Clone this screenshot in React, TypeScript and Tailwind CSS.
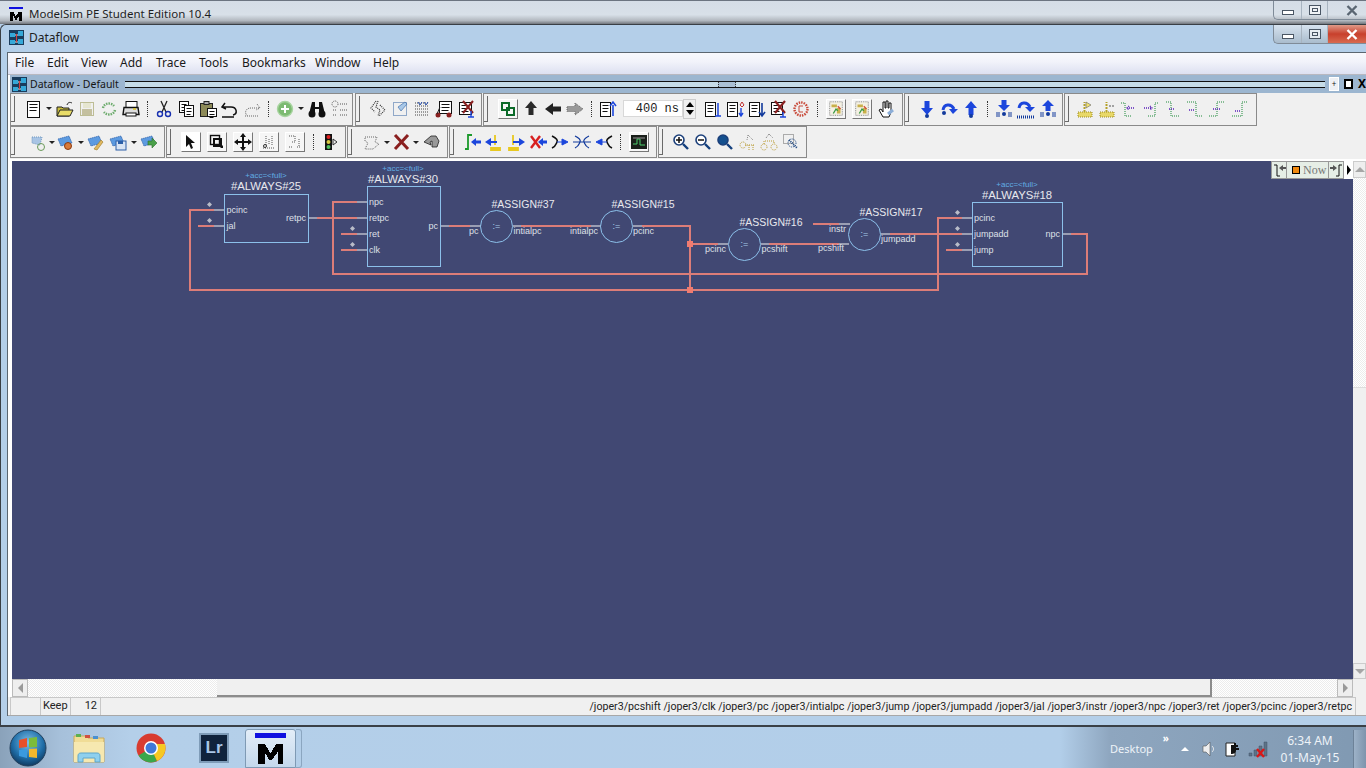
import type { ReactNode } from 'react';

// shared icon frame, 20x20 like the old MFC toolbar bitmaps
function S({ children }: { children: ReactNode }) {
  return (
    <svg width="20" height="20" viewBox="0 0 20 20" fill="none">
      {children}
    </svg>
  );
}

const Blue = '#1c46dc';

function Arrow({ d, c = Blue }: { d: 'u' | 'd' | 'l' | 'r'; c?: string }) {
  const p = {
    u: 'M10 2l6 7h-3.5v7h-5V9H4z',
    d: 'M7.5 2h5v7H16l-6 7-6-7h3.5z',
    l: 'M2 10l8-6v3.5h8v5h-8V16z',
    r: 'M18 10l-8-6v3.5H2v5h8V16z',
  }[d];
  return <path d={p} fill={c} />;
}

function Doc({ x = 2, y = 3, w = 11, h = 14 }: { x?: number; y?: number; w?: number; h?: number }) {
  return (
    <g>
      <rect x={x + 0.5} y={y + 0.5} width={w} height={h} fill="#fff" stroke="#111" />
      <path d={`M${x + 2.5} ${y + 3.5}h${w - 4}M${x + 2.5} ${y + 6.5}h${w - 4}M${x + 2.5} ${y + 9.5}h${w - 5}`} stroke="#111" />
    </g>
  );
}

function DotBox({ c = '#777' }: { c?: string }) {
  return <rect x="3.5" y="3.5" width="13" height="13" stroke={c} strokeDasharray="1 1" />;
}

function Flag({ flip = false }: { flip?: boolean }) {
  return (
    <S>
      <rect x="3" y="13" width="14" height="5" fill="#e8d868" stroke="#9b8a20" strokeDasharray="1 1" />
      <path d="M9.5 13V3" stroke="#b5a22a" strokeWidth="2" strokeDasharray="2 1" />
      {flip ? <path d="M12 7h5" stroke="#555" strokeDasharray="2 1" /> : <path d="M11 3l5 3-5 3z" fill="#f0e070" stroke="#666" strokeWidth=".6" />}
    </S>
  );
}

function Trace({ d, a }: { d: string; a: string }) {
  return (
    <S>
      <path d={d} stroke="#1e8a3a" strokeDasharray="1 1" />
      <path d={a} stroke="#5a22b8" strokeDasharray="1 1" strokeWidth="1.4" />
    </S>
  );
}

function Wave({ y = 0 }: { y?: number }) {
  return (
    <S>
      <rect x="3" y={2 + y} width="14" height="15" fill="#f4f1e4" stroke="#777" strokeDasharray="1 1" />
      <path d="M5 5h6v3H5zM11 9h4v6h-4z" fill="#c9b04a" />
      <path d="M7 15l3-5 2 2" stroke="#3a9a44" strokeWidth="1.5" />
      <path d="M12 7l3 3" stroke="#d04a3a" strokeWidth="1.5" />
    </S>
  );
}

function Cloud({ c = '#5c9ae0' }: { c?: string }) {
  return <path d="M2 7l11-3 3 7-11 3z" fill={c} stroke="#2c5fa8" strokeWidth=".7" strokeDasharray="1.5 .5" />;
}

function Magnify({ fill = '#fff', mark }: { fill?: string; mark?: string }) {
  return (
    <S>
      <circle cx="8" cy="8" r="5" fill={fill} stroke="#1b3f7a" strokeWidth="1.6" />
      <path d="M12 12l5 5" stroke="#14407e" strokeWidth="2.4" />
      {mark ? <path d={mark} stroke="#111" strokeWidth="1.5" /> : null}
    </S>
  );
}

const Wires: string[] = [
  'M214 210H190V290H938V218H962',
  'M198 226H214',
  'M357 202H333V274H1087V234H1071',
  'M317 218H357',
  'M341 234H357',
  'M341 250H357',
  'M449 226H470',
  'M521 226H591',
  'M642 226H690V290',
  'M690 244H718',
  'M769 244H839',
  'M813 224H839',
  'M890 234H962',
  'M946 250H962',
];

const Stubs: string[] = [
  'M214 210H224M214 226H224M309 218H317M357 202H367M357 218H367M357 234H367M357 250H367',
  'M441 226H449M470 226H481M513 226H521M591 226H601M633 226H642M718 244H728M761 244H769',
  'M839 244H849M839 224H850M881 234H890M962 218H972M962 234H972M962 250H972M1063 234H1071',
];

const Labels: [string, number, number][] = [
  ['pcinc', 226.5, 213], ['jal', 226.5, 229], ['npc', 369, 205], ['retpc', 369, 221], ['ret', 369, 237], ['clk', 369, 253],
  ['pc', 469, 234], ['intialpc', 513.5, 234], ['intialpc', 570, 234], ['pcinc', 633, 234], ['pcinc', 705, 252],
  ['pcshift', 761.5, 252], ['pcshift', 818, 251], ['instr', 829, 232], ['jumpadd', 881, 242],
  ['pcinc', 974, 221], ['jumpadd', 974, 237], ['jump', 974, 253],
];

const Dots: [number, number][] = [
  [209.5, 204.5], [209.5, 220.5], [352.5, 228.5], [352.5, 244.5], [957.5, 212.5], [957.5, 228.5], [957.5, 244.5],
];

const Boxes: [string, number, number, number, number, number, number][] = [
  ['#ALWAYS#25', 224.5, 194.5, 84, 48, 266, 190],
  ['#ALWAYS#30', 367.5, 186.5, 73, 80, 403, 183],
  ['#ALWAYS#18', 972.5, 202.5, 90, 64, 1017, 199],
];

const Assigns: [string, number, number, number, number][] = [
  ['#ASSIGN#37', 496.5, 226.5, 523, 208],
  ['#ASSIGN#15', 616.5, 226.5, 643, 208],
  ['#ASSIGN#16', 744.5, 244.5, 771, 226],
  ['#ASSIGN#17', 864.5, 234.5, 891, 216],
];

function Schematic() {
  return (
    <svg width="1341" height="518" viewBox="12 161 1341 518" fill="none" className="block font-['Liberation_Sans',sans-serif]">
      {Wires.map((d) => (
        <path key={d} d={d} stroke="#dc7d78" strokeWidth="2" />
      ))}
      {Stubs.map((d) => (
        <path key={d} d={d} stroke="#f4f4f4" />
      ))}
      <rect x="687" y="241" width="6" height="6" fill="#f07b70" />
      <rect x="687" y="287" width="6" height="6" fill="#f07b70" />
      {Dots.map(([x, y]) => (
        <path key={`${x}-${y}`} d={`M${x} ${y - 2.5}l2.5 2.5-2.5 2.5-2.5-2.5z`} fill="#b9bcc8" />
      ))}
      {Boxes.map(([t, x, y, w, h, cx, by]) => (
        <g key={t}>
          <rect x={x} y={y} width={w} height={h} stroke="#8cc0ea" />
          <text x={cx} y={by} textAnchor="middle" className="fill-[#e8e8ee] text-[11.3px]">{t}</text>
          <text x={cx} y={by - 12} textAnchor="middle" className="fill-[#62aee4] text-[8px]">{'+acc=<full>'}</text>
        </g>
      ))}
      {Assigns.map(([t, x, y, tx, by]) => (
        <g key={t}>
          <circle cx={x} cy={y} r="16" stroke="#8cc0ea" />
          <text x={x} y={y + 2} textAnchor="middle" className="fill-[#a8cdec] text-[9px]">:=</text>
          <text x={tx} y={by} textAnchor="middle" className="fill-[#e8e8ee] text-[10.5px]">{t}</text>
        </g>
      ))}
      {Labels.map(([t, x, y]) => (
        <text key={`${t}-${x}`} x={x} y={y} className="fill-[#dfe0e8] text-[9px]">{t}</text>
      ))}
      <text x="306" y="221" textAnchor="end" className="fill-[#dfe0e8] text-[9px]">retpc</text>
      <text x="438" y="229" textAnchor="end" className="fill-[#dfe0e8] text-[9px]">pc</text>
      <text x="1060" y="237" textAnchor="end" className="fill-[#dfe0e8] text-[9px]">npc</text>
    </svg>
  );
}

function Slot({ className = 'w-[22px]', children }: { className?: string; children: ReactNode }) {
  return <div className={`flex shrink-0 items-center justify-center ${className}`}>{children}</div>;
}

function Drop({ className = 'w-[10px]' }: { className?: string }) {
  return (
    <div className={`flex shrink-0 items-center justify-center ${className}`}>
      <div className="h-0 w-0 border-x-[3px] border-t-[3px] border-x-transparent border-t-[#222]" />
    </div>
  );
}

function Sep() {
  return (
    <div className="flex w-[11px] shrink-0 justify-center">
      <div className="h-[16px] border-l border-dotted border-[#333]" />
    </div>
  );
}

function Raised({ on, children }: { on?: boolean; children: ReactNode }) {
  return (
    <div className={`flex h-[20px] w-[20px] items-center justify-center border border-b-[#777] border-l-white border-r-[#777] border-t-white ${on ? 'bg-white' : 'bg-[#f6f6f6]'}`}>
      {children}
    </div>
  );
}

function Bar({ className, lead, children }: { className: string; lead: string; children: ReactNode }) {
  return (
    <div className={`flex h-full shrink-0 items-center border border-[#8a8a8a] bg-[#f0f0f0] ${className}`}>
      <div className={`h-[26px] w-[4px] shrink-0 border-b border-r border-[#6a6a6a] ${lead}`} />
      {children}
    </div>
  );
}

function RowOne() {
  return (
    <div className="flex h-[33px] shrink-0">
      <Bar className="w-[343px] pb-[2px]" lead="mr-[7px]">
        <Slot><S><Doc x={4} y={2} w={12} h={16} /></S></Slot>
        <Drop />
        <Slot>
          <S>
            <path d="M2 8h5l1 1h6v8H2z" fill="#c9bd3c" stroke="#222" />
            <path d="M2 17l3-6h13l-3 6z" fill="#e8dc68" stroke="#222" />
            <path d="M12 6c1-3 3-3 5-2" stroke="#222" />
          </S>
        </Slot>
        <Slot><S><DotBox c="#8a8a3a" /><rect x="5" y="10" width="10" height="6" fill="#c4c0a0" /><rect x="6" y="4" width="8" height="5" fill="#e6e6d0" /></S></Slot>
        <Slot><S><path d="M4 9c1-5 8-6 11-2M16 11c-1 5-8 6-11 2" stroke="#6cab6c" strokeWidth="2.4" strokeDasharray="1.5 1" /></S></Slot>
        <Slot>
          <S>
            <rect x="5" y="2.5" width="11" height="6" fill="#fff" stroke="#111" />
            <path d="M3 8.5h14l1 7H2z" fill="#ddd" stroke="#111" strokeWidth="1.4" />
            <rect x="5" y="14" width="10" height="3" fill="#fff" stroke="#111" />
            <path d="M12 10h3" stroke="#d8c020" strokeWidth="1.5" />
          </S>
        </Slot>
        <Sep />
        <Slot>
          <S>
            <path d="M7 2l5 11M13 2L8 13" stroke="#222" strokeWidth="1.3" />
            <circle cx="6" cy="15" r="2.5" stroke="#1830b0" strokeWidth="1.4" />
            <circle cx="14" cy="15" r="2.5" stroke="#1830b0" strokeWidth="1.4" />
          </S>
        </Slot>
        <Slot><S><Doc x={3} y={2} w={9} h={11} /><Doc x={8} y={6} w={9} h={11} /></S></Slot>
        <Slot>
          <S>
            <rect x="2.5" y="4.5" width="12" height="13" fill="#8d8a58" stroke="#222" />
            <rect x="6" y="2.5" width="5" height="3" fill="#aaa" stroke="#222" />
            <Doc x={9} y={9} w={9} h={8} />
          </S>
        </Slot>
        <Slot><S><path d="M5 4L2 8l4 2M3 8h8c6 0 7 7 2 8" stroke="#111" strokeWidth="1.5" /><path d="M2 18h12" stroke="#111" strokeWidth="1.5" /></S></Slot>
        <Slot><S><path d="M15 5l3 4-4 2M17 9H9c-6 0-7 6-3 8" stroke="#666" strokeDasharray="1 1" /><path d="M3 17h14" stroke="#666" strokeDasharray="1 1" /></S></Slot>
        <Sep />
        <Slot>
          <S>
            <circle cx="10" cy="10" r="7.5" fill="#7dbb72" stroke="#a8d4a0" strokeWidth="1.4" />
            <path d="M10 6v8M6 10h8" stroke="#fff" strokeWidth="2" />
          </S>
        </Slot>
        <Drop />
        <Slot>
          <S>
            <path d="M5 3h3v5h4V3h3l3 12h-6V10H8v5H2z" fill="#111" />
            <circle cx="5" cy="15" r="3.5" fill="#111" />
            <circle cx="15" cy="15" r="3.5" fill="#111" />
          </S>
        </Slot>
        <Slot>
          <S>
            <circle cx="6" cy="5" r="3" stroke="#555" strokeDasharray="1 1" />
            <path d="M11 5h7M4 11h4M11 11h7M4 16h4M11 16h7" stroke="#555" strokeDasharray="1 1" />
          </S>
        </Slot>
      </Bar>
      <Bar className="ml-[2px] w-[127px] pb-[2px]" lead="mr-[7px]">
        <Slot><S><path d="M8 2L3 9l4 4M12 6l5 5-6 6M10 2l-2 6 4 3-2 6" stroke="#333" strokeDasharray="1 1" strokeWidth="1.2" /></S></Slot>
        <Slot><S><DotBox c="#3060a0" /><path d="M8 8l7-5 2 2-6 7z" fill="#a8c8e8" stroke="#3060a0" strokeWidth=".6" /></S></Slot>
        <Slot><S><path d="M3 4h14M3 7h14M3 10h14M3 13h14M3 16h14" stroke="#444" strokeDasharray="1 1" /><path d="M6 3l2 3 2-3M12 3l2 3 2-3" stroke="#2850b0" /></S></Slot>
        <Slot>
          <S>
            <Doc x={5} y={2} w={12} h={12} />
            <circle cx="4" cy="16" r="2.5" fill="#8a2020" />
            <circle cx="15" cy="16" r="2.5" fill="#8a2020" />
            <path d="M3 15L6 8" stroke="#222" />
          </S>
        </Slot>
        <Slot>
          <S>
            <Doc x={3} y={3} w={12} h={12} />
            <path d="M7 2l10 12M17 2L7 14" stroke="#8a2020" strokeWidth="2" />
            <path d="M15 12v6M12 18h6" stroke={Blue} strokeWidth="1.4" />
          </S>
        </Slot>
      </Bar>
      <Bar className="ml-[1px] w-[420px] pb-[2px]" lead="mr-[9px]">
        <Slot>
          <Raised>
            <svg width="16" height="16" viewBox="0 0 16 16" fill="none">
              <rect x="2" y="2" width="7" height="7" stroke="#0b6a28" strokeWidth="2" />
              <rect x="7" y="7" width="7" height="7" stroke="#0b6a28" strokeWidth="2" />
            </svg>
          </Raised>
        </Slot>
        <Slot className="w-[23px]"><S><Arrow d="u" c="#2a2a2a" /></S></Slot>
        <Slot><S><Arrow d="l" c="#222" /></S></Slot>
        <Slot><S><path d="M18 10l-8-6v3.5H2v5h8V16z" fill="#999" stroke="#666" strokeDasharray="1 1" /></S></Slot>
        <Sep />
        <Slot><S><Doc x={2} y={3} w={10} h={14} /><path d="M15 17V6M12 7l3-4 3 4" stroke={Blue} strokeWidth="1.6" /></S></Slot>
        <div className="ml-[4px] flex h-[17px] w-[60px] shrink-0 items-center justify-end border border-[#d8d8d8] bg-white pr-[3px] font-['Liberation_Mono',monospace] text-[12px] text-[#222]">
          400 ns
        </div>
        <div className="flex h-[20px] w-[13px] shrink-0 flex-col items-center justify-center gap-[3px] border border-[#ccc]">
          <div className="h-0 w-0 border-x-[4px] border-b-[5px] border-x-transparent border-b-black" />
          <div className="h-0 w-0 border-x-[4px] border-t-[5px] border-x-transparent border-t-black" />
        </div>
        <Slot className="ml-[6px] w-[22px]"><S><Doc x={2} y={3} w={10} h={14} /><path d="M15 4v13M12 17h6" stroke={Blue} strokeWidth="1.5" /></S></Slot>
        <Slot><S><Doc x={2} y={3} w={10} h={14} /><path d="M15 6l2-3 2 3-2 2z" stroke="#c03030" /><path d="M16 9v8M14 14l2 3 2-3" stroke={Blue} strokeWidth="1.4" /></S></Slot>
        <Slot><S><Doc x={2} y={3} w={10} h={14} /><path d="M15 4v13M12 13l3 4 3-4" stroke="#123a9c" strokeWidth="1.6" /></S></Slot>
        <Slot><S><Doc x={2} y={3} w={11} h={12} /><path d="M6 2l10 12M16 2L6 14" stroke="#8a2020" strokeWidth="2.2" /><path d="M14 13v5M11 18h6" stroke={Blue} strokeWidth="1.4" /></S></Slot>
        <Slot><S><circle cx="10" cy="10" r="6.5" stroke="#c84a3a" strokeWidth="2.4" strokeDasharray="1.5 1" /><path d="M12 7H8v6h4" stroke="#c84a3a" /></S></Slot>
        <Sep />
        <Slot className="w-[26px]"><Raised><Wave /></Raised></Slot>
        <Slot className="w-[25px]"><Raised><Wave /></Raised></Slot>
        <Slot className="w-[24px]">
          <S>
            <path d="M7 18l-4-7 2-1 2 3V3h2v6h1V2h2v7h1V4h2v9l-2 5z" fill="#fff" stroke="#111" />
            <path d="M12 15l5-4" stroke="#8caed8" strokeWidth="3" />
          </S>
        </Slot>
      </Bar>
      <Bar className="ml-[1px] w-[159px] pb-[2px]" lead="mr-[7px]">
        <Slot><S><Arrow d="d" /><circle cx="10" cy="17" r="2" fill="#123a9c" /></S></Slot>
        <Slot><S><path d="M4 11c1-6 8-7 11-1" stroke={Blue} strokeWidth="3" /><path d="M10 10h9l-5 5z" fill={Blue} /><circle cx="5" cy="14" r="2" fill="#123a9c" /></S></Slot>
        <Slot><S><Arrow d="u" /><circle cx="10" cy="17" r="2" fill="#123a9c" /></S></Slot>
        <Sep />
        <Slot><S><path d="M7.5 1h5v5H16l-6 6-6-6h3.5z" fill={Blue} /><circle cx="10" cy="15" r="2" fill="#123a9c" /><path d="M3 13v5M5 13v5M15 13v5M17 13v5" stroke="#123a9c" /></S></Slot>
        <Slot><S><path d="M3 9c1-6 8-7 11-1" stroke={Blue} strokeWidth="3" /><path d="M9 8h10l-5 5z" fill={Blue} /><path d="M1 18h18" stroke="#123a9c" strokeWidth="3" strokeDasharray="1 1" /></S></Slot>
        <Slot><S><path d="M10 1l6 6h-3.5v5h-5V7H4z" fill={Blue} /><circle cx="10" cy="15" r="2" fill="#123a9c" /><path d="M3 13v5M5 13v5M15 13v5M17 13v5" stroke="#123a9c" /></S></Slot>
      </Bar>
      <Bar className="ml-[1px] w-[193px] pb-[2px]" lead="mr-[5px]">
        <Slot><Flag /></Slot>
        <Slot><Flag flip /></Slot>
        <Slot><Trace d="M2 4h4v13h7" a="M15 9H8M10 7l-2 2 2 2" /></Slot>
        <Slot><Trace d="M17 4h-3v13H7" a="M3 9h8M9 7l2 2-2 2" /></Slot>
        <Slot><Trace d="M3 3h5v14h9" a="M6 10h5" /></Slot>
        <Slot><Trace d="M2 3h9v14h6" a="M4 11h6" /></Slot>
        <Slot><Trace d="M17 3h-7v14H2" a="M6 10h8" /></Slot>
        <Slot><Trace d="M18 3h-5v14H3" a="M6 12h6" /></Slot>
      </Bar>
    </div>
  );
}

function RowTwo() {
  return (
    <div className="flex h-[32px] shrink-0">
      <Bar className="w-[155px]" lead="mr-[12px]">
        <Slot><S><path d="M4 5l10 0-2 8-8-2z" fill="#a8c4e4" stroke="#7098c0" strokeDasharray="1 1" /><circle cx="13" cy="15" r="3.5" stroke="#6a9a5a" /></S></Slot>
        <Drop className="w-[6px]" />
        <Slot><S><Cloud /><circle cx="12" cy="14" r="3.5" fill="#d87a3a" stroke="#8a3a10" /></S></Slot>
        <Drop className="w-[8px]" />
        <Slot><S><Cloud /><path d="M8 17l7-9 2 2-6 8z" fill="#e0b860" stroke="#a07820" strokeWidth=".6" /></S></Slot>
        <Slot><S><Cloud /><rect x="8" y="9" width="10" height="9" fill="#d8e4f4" stroke="#2c5fa8" /><rect x="10" y="9" width="5" height="3" fill="#2c5fa8" /></S></Slot>
        <Drop className="w-[9px]" />
        <Slot><S><Cloud /><path d="M9 9h4V6l5 5-5 5v-3H9z" fill="#4aa04a" stroke="#2a702a" strokeWidth=".6" /></S></Slot>
      </Bar>
      <Bar className="ml-[1px] w-[180px]" lead="mr-[7px]">
        <Slot className="w-[26px]">
          <Raised on>
            <svg width="16" height="16" viewBox="0 0 16 16"><path d="M3 1v12l3-3 2 5 2-1-2-5h4z" fill="#111" /></svg>
          </Raised>
        </Slot>
        <Slot className="w-[26px]">
          <Raised>
            <svg width="16" height="16" viewBox="0 0 16 16" fill="none"><rect x="1.5" y="1.5" width="9" height="9" stroke="#111" strokeWidth="1.4" /><rect x="5" y="5" width="7" height="7" stroke="#111" strokeWidth="2" /><path d="M11 14l3-3v3z" fill="#111" /></svg>
          </Raised>
        </Slot>
        <Slot className="w-[26px]">
          <Raised>
            <svg width="18" height="18" viewBox="0 0 18 18"><path d="M9 0l3 4h-2v4h4V6l4 3-4 3v-2h-4v4h2l-3 4-3-4h2v-4H4v2L0 9l4-3v2h4V4H6z" fill="#111" /></svg>
          </Raised>
        </Slot>
        <Slot className="w-[26px]">
          <Raised>
            <svg width="16" height="16" viewBox="0 0 16 16" fill="none"><path d="M5 2v9M11 2v9M8 5v6M2 14h12" stroke="#555" strokeDasharray="1 1" /><circle cx="4" cy="12" r="1.5" stroke="#333" /></svg>
          </Raised>
        </Slot>
        <Slot className="w-[26px]">
          <Raised>
            <svg width="16" height="16" viewBox="0 0 16 16" fill="none"><path d="M2 2h6v6H4M12 5v7M2 13h4M10 13h4" stroke="#555" strokeDasharray="1 1" /></svg>
          </Raised>
        </Slot>
        <Sep />
        <Slot>
          <S>
            <rect x="5" y="2" width="7" height="16" fill="#111" />
            <circle cx="8.5" cy="5" r="2" fill="#e02020" />
            <circle cx="8.5" cy="10" r="2" fill="#d8c840" />
            <circle cx="8.5" cy="15" r="2" fill="#50c060" />
            <path d="M13 7l4 3-4 3z" stroke="#333" />
          </S>
        </Slot>
      </Bar>
      <Bar className="ml-[1px] w-[101px]" lead="mr-[9px]">
        <Slot><S><path d="M3 5h12l-2 5 4 2-6 5H3l3-6-3-2z" stroke="#666" strokeDasharray="1 1" /></S></Slot>
        <Drop className="w-[7px]" />
        <Slot><S><path d="M4 3l13 14M17 3L4 17" stroke="#8a1f1f" strokeWidth="3" /></S></Slot>
        <Drop className="w-[8px]" />
        <Slot><S><path d="M3 10l7-6h5l3 5-2 6h-5V9l-2 1 1 3z" fill="#999" stroke="#222" strokeWidth=".8" /></S></Slot>
      </Bar>
      <Bar className="ml-[1px] w-[208px]" lead="mr-[7px]">
        <Slot><S><path d="M3 17h3V3h4" stroke="#1c9a2c" strokeWidth="1.8" /><path d="M9 10l5-4v2.500h5v3h-5V14z" fill={Blue} /></S></Slot>
        <Slot><S><path d="M11 3v10M7 16h9v2H7z" stroke="#e8c820" strokeWidth="1.8" /><path d="M1 10l6-4v3h6v2H7v3z" fill={Blue} /></S></Slot>
        <Slot><S><path d="M7 3v10M3 16h9v2H3z" stroke="#e8c820" strokeWidth="1.8" /><path d="M19 10l-6-4v3H7v2h6v3z" fill={Blue} /></S></Slot>
        <Slot><S><path d="M3 4l9 12M12 4L3 16" stroke="#d82020" strokeWidth="2.4" /><path d="M10 10l5-4v2.500h4v3h-4V14z" fill={Blue} /></S></Slot>
        <Slot><S><path d="M2 4c4 2 6 4 5 6s-1 4-5 6" stroke="#111" strokeWidth="1.6" /><path d="M7 10h5V7l6 3-6 3v-3" fill={Blue} stroke={Blue} /></S></Slot>
        <Slot><S><path d="M3 4c4 2 6 4 5 6s-1 4-5 6M17 4c-4 2-6 4-5 6s1 4 5 6M1 10h18" stroke="#123a9c" strokeWidth="1.2" /></S></Slot>
        <Slot><S><path d="M18 4c-4 2-6 4-5 6s1 4 5 6" stroke="#111" strokeWidth="1.6" /><path d="M13 10H8V7l-6 3 6 3v-3" fill={Blue} stroke={Blue} /></S></Slot>
        <Sep />
        <Slot className="w-[26px]">
          <Raised>
            <svg width="16" height="14" viewBox="0 0 16 14"><rect width="16" height="14" fill="#1a1f1a" /><path d="M2 9h4V4h3v6h5" stroke="#4ad06a" fill="none" /><path d="M2 3h12" stroke="#999" /></svg>
          </Raised>
        </Slot>
      </Bar>
      <Bar className="ml-[1px] w-[149px]" lead="mr-[7px]">
        <Slot><Magnify mark="M8 5v6M5 8h6" /></Slot>
        <Slot><Magnify mark="M5 8h6" /></Slot>
        <Slot><Magnify fill="#14508e" /></Slot>
        <Slot><S><circle cx="6" cy="13" r="3" stroke="#b89a30" strokeDasharray="1 1" /><path d="M8 13h9M12 13v5M16 13v5" stroke="#b89a30" strokeDasharray="1 1" /><path d="M11 3l5 5M11 3l-1 5" stroke="#888" strokeDasharray="1 1" /></S></Slot>
        <Slot><S><circle cx="5" cy="15" r="3" stroke="#b89a30" strokeDasharray="1 1" /><circle cx="15" cy="15" r="3" stroke="#b89a30" strokeDasharray="1 1" /><path d="M5 12V9h10v3" stroke="#b89a30" strokeDasharray="1 1" /><path d="M10 2l4 4M10 2L7 6" stroke="#777" strokeDasharray="1 1" /></S></Slot>
        <Slot><S><rect x="2.5" y="2.5" width="10" height="9" stroke="#666" strokeDasharray="1 1" /><path d="M8 8l8 8" stroke="#14407e" strokeWidth="2" strokeDasharray="1 1" /><circle cx="11" cy="11" r="4" stroke="#14407e" strokeDasharray="1 1" /></S></Slot>
      </Bar>
    </div>
  );
}

function Menu() {
  const items: [string, string][] = [
    ['File', 'w-[32px]'],
    ['Edit', 'w-[34px]'],
    ['View', 'w-[39px]'],
    ['Add', 'w-[36px]'],
    ['Trace', 'w-[43px]'],
    ['Tools', 'w-[43px]'],
    ['Bookmarks', 'w-[73px]'],
    ['Window', 'w-[58px]'],
    ['Help', 'w-[40px]'],
  ];
  return (
    <div className="flex h-[22px] shrink-0 items-center border-b border-[#b8b8c0] bg-[linear-gradient(#f8f9fd,#f2f3fa_40%,#dde0f1)] pb-[2px] pl-[7px] text-[12px] text-[#1a1a1a]">
      {items.map(([label, w]) => (
        <span key={label} className={w}>{label}</span>
      ))}
    </div>
  );
}

function DataflowGlyph() {
  return (
    <svg width="15" height="15" viewBox="0 0 15 15">
      <rect width="15" height="15" fill="#1a3c5c" />
      <path d="M1 3h5v4H1zM9 1h5v5H9zM1 10h5v4H1zM9 9h5v5H9z" fill="#35a8d8" />
      <path d="M6 5h3M6 12h3" stroke="#e8e8e8" />
      <path d="M7.500 4v8" stroke="#d04040" />
    </svg>
  );
}

function Caption({ active }: { active?: boolean }) {
  return (
    <div className={`ml-auto flex h-[19px] w-[93px] shrink-0 self-start rounded-bl-[5px] border-b border-l border-[#7f8b98] text-[#26323e] ${active ? 'bg-[linear-gradient(#d6e2ee,#a9bccd)]' : ''}`}>
      <div className="flex w-[28px] items-end justify-center border-r border-[#a8b4c0] pb-[4px]">
        <div className="h-[5px] w-[12px] border border-[#4a5664] bg-white" />
      </div>
      <div className="flex w-[26px] items-center justify-center border-r border-[#a8b4c0]">
        <div className="flex h-[10px] w-[12px] items-center justify-center border border-[#4a5664] bg-white/60">
          <div className="h-[4px] w-[6px] border border-[#4a5664]" />
        </div>
      </div>
      <div className={`flex flex-1 items-center justify-center pl-[10px] ${active ? 'bg-[linear-gradient(#e09a88,#c8402c_50%,#d86a50)]' : ''}`}>
        <svg width="12" height="11" viewBox="0 0 12 11">
          <path d="M1.500 1l9 9M10.500 1l-9 9" stroke={active ? '#fff' : '#5a6672'} strokeWidth="2.4" />
        </svg>
      </div>
    </div>
  );
}

function TrackV() {
  return (
    <div className="flex w-[13px] shrink-0 flex-col bg-[#f0f0f0]">
      <div className="flex h-[17px] items-center justify-center border border-[#ccc] bg-[#eee]">
        <div className="h-0 w-0 border-x-[5px] border-b-[5px] border-x-transparent border-b-[#a6a6a6]" />
      </div>
      <div className="h-[209px] bg-[repeating-conic-gradient(#ececec_0_25%,#ffffff_0_50%)] bg-[length:2px_2px]" />
      <div className="flex-1 border-t border-[#ddd]" />
      <div className="flex h-[16px] items-center justify-center border border-[#ccc] bg-[#eee]">
        <div className="h-0 w-0 border-x-[5px] border-t-[5px] border-x-transparent border-t-[#a6a6a6]" />
      </div>
    </div>
  );
}

function TrackH() {
  return (
    <div className="ml-[4px] flex h-[18px] shrink-0">
      <div className="flex w-[16px] items-center justify-center border border-[#bbb] bg-[#eee]">
        <div className="h-0 w-0 border-y-[5px] border-r-[5px] border-y-transparent border-r-[#999]" />
      </div>
      <div className="w-[189px] bg-[repeating-conic-gradient(#ececec_0_25%,#ffffff_0_50%)] bg-[length:2px_2px]" />
      <div className="w-[995px] border-b-2 border-r-2 border-[#8c8c8c] bg-[#f0f0f0]" />
      <div className="w-[125px] bg-[repeating-conic-gradient(#ececec_0_25%,#ffffff_0_50%)] bg-[length:2px_2px]" />
      <div className="flex w-[16px] items-center justify-center border border-[#bbb] bg-[#eee]">
        <div className="h-0 w-0 border-y-[5px] border-l-[5px] border-y-transparent border-l-[#999]" />
      </div>
      <div className="flex-1 bg-[#f0f0f0]" />
    </div>
  );
}

function NowBar() {
  return (
    <div className="absolute right-0 top-0 flex h-[18px] bg-white">
      <div className="flex h-[18px] w-[73px] border border-[#999] bg-[#e6eee6] text-[#777]">
        <div className="flex w-[15px] items-center justify-center border-r border-[#999]">
          <svg width="13" height="13" viewBox="0 0 13 13" fill="none"><path d="M1 1h3v11h3" stroke="#111" /><path d="M6 4l4-3v2h3v2h-3v2z" fill="#555" /></svg>
        </div>
        <div className="flex flex-1 items-center gap-[3px] pl-[5px] font-['Liberation_Serif',serif] text-[12px]">
          <span className="h-[8px] w-[8px] border border-black bg-[#f08a10]" />
          <span>Now</span>
        </div>
        <div className="flex w-[15px] items-center justify-center border-l border-[#999]">
          <svg width="13" height="13" viewBox="0 0 13 13" fill="none"><path d="M12 1H9v11H6" stroke="#111" /><path d="M7 4L3 1v2H0v2h3v2z" fill="#555" /></svg>
        </div>
      </div>
      <div className="flex w-[9px] items-center justify-center">
        <div className="h-0 w-0 border-y-[5px] border-l-[4px] border-y-transparent border-l-black" />
      </div>
    </div>
  );
}

function StatusBar() {
  return (
    <div className="flex h-[19px] shrink-0 border-b border-[#a8a8a8] bg-[#f0f0f0] pl-[2px] font-['Roboto',sans-serif] text-[11px] text-[#222]">
      <div className="w-[31px] border-l border-r border-t border-[#c8c8c8]" />
      <div className="flex w-[30px] items-center border-r border-t border-[#c8c8c8] pl-[2px]">Keep</div>
      <div className="flex w-[30px] items-center justify-end border-r border-t border-[#c8c8c8] pr-[3px]">12</div>
      <div className="flex w-[1255px] items-center justify-end overflow-hidden whitespace-nowrap border-r border-t border-[#c8c8c8] pr-[3px] text-[10.66px]">
        /joper3/pcshift /joper3/clk /joper3/pc /joper3/intialpc /joper3/jump /joper3/jumpadd /joper3/jal /joper3/instr /joper3/npc /joper3/ret /joper3/pcinc /joper3/retpc
      </div>
    </div>
  );
}

function MLogo({ size }: { size: number }) {
  return (
    <svg width={size} height={size} viewBox="0 0 28 28" shapeRendering="crispEdges">
      <rect x="1" y="1" width="26" height="4" fill="#1010e0" />
      <path d="M3 10h6l5 8 5-8h6v17h-5V17l-5 7h-2l-4-7v10H3z" fill="#000" />
    </svg>
  );
}

function Taskbar() {
  return (
    <div className="flex h-[41px] shrink-0 items-center bg-[linear-gradient(90deg,#8aa2ba,#a6c0da_60px,#b4cfe9_130px,#b2cee9_1060px,#8ea6bf_1110px,#8099b2)]">
      <div className="ml-[9px] flex w-[38px] shrink-0 items-center justify-center">
        <svg width="38" height="38" viewBox="0 0 38 38">
          <defs>
            <radialGradient id="orb" cx="50%" cy="35%" r="70%">
              <stop offset="0" stopColor="#7fc0e8" />
              <stop offset="0.6" stopColor="#1f6ea8" />
              <stop offset="1" stopColor="#0c2f52" />
            </radialGradient>
          </defs>
          <circle cx="19" cy="19" r="18" fill="url(#orb)" stroke="#23405c" />
          <path d="M10 11l8-2v9l-8 1z" fill="#e8502a" />
          <path d="M20 9l8-1v10l-8 .5z" fill="#7cbc3a" />
          <path d="M10 21l8-1v9l-8-2z" fill="#3a9ae0" />
          <path d="M20 20l8-.5V29l-8-1z" fill="#f4b82c" />
        </svg>
      </div>
      <div className="ml-[25px] flex w-[34px] shrink-0 items-center justify-center">
        <svg width="32" height="30" viewBox="0 0 32 30">
          <path d="M1 3h12l2 2h16v24H1z" fill="#f0dc96" stroke="#c8a858" />
          <rect x="3" y="1" width="5" height="3" fill="#5cb050" />
          <rect x="12" y="2" width="5" height="3" fill="#d05040" />
          <rect x="20" y="3" width="5" height="3" fill="#4a90d0" />
          <path d="M1 9h30v20H1z" fill="#f6e8b0" />
          <path d="M5 29v-6c0-2 1-3 3-3h16c2 0 3 1 3 3v6h-5v-4H10v4z" fill="#8fd0ee" stroke="#5ea6cc" />
        </svg>
      </div>
      <div className="ml-[30px] flex w-[30px] shrink-0 items-center justify-center">
        <svg width="30" height="30" viewBox="0 0 30 30">
          <circle cx="15" cy="15" r="14.500" fill="#d83c30" />
          <path d="M15 15L2.500 22.500A14.500 14.500 0 0 0 21 28z" fill="#3aa74a" />
          <path d="M15 15L21 28A14.500 14.500 0 0 0 29 11H15z" fill="#f6c822" />
          <circle cx="15" cy="15" r="7" fill="#fff" />
          <circle cx="15" cy="15" r="5.500" fill="#3f78d8" />
        </svg>
      </div>
      <div className="ml-[33px] flex h-[30px] w-[30px] shrink-0 items-center justify-center border-2 border-[#7f9cb8] bg-[#10233c] font-['Liberation_Sans',sans-serif] text-[17px] font-bold text-[#a9c6e6]">
        Lr
      </div>
      <div className="ml-[16px] flex h-[39px] w-[51px] shrink-0 items-center justify-center self-end rounded-t-[3px] border border-[#7f9ab4] bg-[linear-gradient(#e4eef8,#c4d8ec)]">
        <MLogo size={33} />
      </div>
      <div className="h-[39px] w-[6px] self-end rounded-r-[3px] border border-l-0 border-[#8ba6c0]" />
      <div className="ml-auto flex h-full items-center pt-[3px]">
        <span className="text-[11px] text-[#eef3f8]">Desktop</span>
        <span className="mb-[22px] ml-[10px] text-[10px] font-bold leading-none text-white">»</span>
        <div className="ml-[12px] h-0 w-0 border-x-[4px] border-b-[4px] border-x-transparent border-b-white" />
        <div className="ml-[13px] flex w-[14px] justify-center">
          <svg width="14" height="16" viewBox="0 0 14 16"><path d="M1 5h3l4-4v14l-4-4H1z" fill="#eee" stroke="#555" strokeWidth=".6" /><path d="M10 5c2 2 2 4 0 6" stroke="#eee" fill="none" /></svg>
        </div>
        <div className="ml-[8px] flex w-[18px] justify-center">
          <svg width="18" height="18" viewBox="0 0 18 18"><path d="M2 3h9v13H2z" fill="#fff" stroke="#222" /><path d="M7 5h3V3h2v2h2v2h-2v1h3v2h-3c0 3-2 4-5 4z" fill="#111" /></svg>
        </div>
        <div className="ml-[6px] flex w-[20px] justify-center">
          <svg width="20" height="18" viewBox="0 0 20 18">
            <path d="M1 13h3v3H1zM6 10h3v6H6zM11 6h3v10h-3zM16 2h3v14h-3z" fill="#5e7286" stroke="#41566a" strokeWidth=".5" />
            <path d="M9 9l7 8M16 9l-7 8" stroke="#d81818" strokeWidth="2.4" />
          </svg>
        </div>
        <div className="ml-[11px] flex w-[62px] flex-col items-center text-[12px] leading-[17px] text-[#eef3f8]">
          <span>6:34 AM</span>
          <span>01-May-15</span>
        </div>
        <div className="ml-[12px] h-full w-[13px] border-l border-[#6d8298] bg-[linear-gradient(90deg,#9db2c8,#7d94ac)]" />
      </div>
    </div>
  );
}

export default function App() {
  return (
    <div className="flex h-[768px] w-[1366px] flex-col overflow-hidden bg-[#b4cfe9] font-['Noto_Sans',sans-serif]">
      {/* outer ModelSim frame */}
      <div className="flex h-[24px] shrink-0 items-start border-t border-[#6c7480] bg-[linear-gradient(#d5dde6,#d8e0e8_60%,#b2b8bf_85%,#71767c)]">
        <div className="ml-[8px] mt-[5px] h-[16px] w-[16px] shrink-0"><MLogo size={16} /></div>
        <span className="ml-[5px] mt-[5px] text-[11.5px] leading-[16px] text-[#1e1e1e]">ModelSim PE Student Edition 10.4</span>
        <Caption />
      </div>

      {/* Dataflow window */}
      <div className="flex min-h-0 flex-1 flex-col rounded-tl-[6px] border-l border-t border-[#3a3f45] bg-[#b4cfe9]">
        <div className="flex h-[27px] shrink-0 items-start">
          <div className="ml-[8px] mt-[5px] shrink-0"><DataflowGlyph /></div>
          <span className="ml-[5px] mt-[5px] text-[12px] leading-[16px] text-[#1e1e1e]">Dataflow</span>
          <Caption active />
        </div>

        <div className="ml-[6px] flex min-h-0 flex-col border-l border-t border-[#5b6670] bg-white">
          <Menu />
          <div className="ml-[2px] flex h-[18px] shrink-0 items-center bg-[#9cb6d0] text-[#151515]">
            <div className="ml-[2px] shrink-0"><DataflowGlyph /></div>
            <span className="ml-[3px] w-[95px] shrink-0 whitespace-nowrap pt-[1px] text-[10.5px]">Dataflow - Default</span>
            <div className="relative h-[7px] flex-1 border-y border-[#101010] bg-[#c6dce8]">
              <div className="absolute left-[593px] top-0 h-full w-[18px] border-x border-dotted border-[#333] bg-[#aac0d4]" />
            </div>
            <div className="ml-[4px] h-[14px] w-[10px] shrink-0 border border-white bg-[#eef0f4] text-center text-[8px] leading-[12px]">+</div>
            <div className="ml-[5px] h-[10px] w-[9px] shrink-0 border-2 border-black bg-white" />
            <div className="ml-[5px] w-[8px] shrink-0 text-[12px] font-bold leading-none text-black">X</div>
          </div>
          <div className="ml-[2px] flex h-[68px] shrink-0 flex-col bg-[#f0f0f0]">
            <RowOne />
            <RowTwo />
            <div className="flex-1 border-b-2 border-white" />
          </div>
          <div className="flex h-[518px] shrink-0">
            <div className="relative ml-[4px] w-[1341px] shrink-0 bg-[#414873]">
              <Schematic />
              <NowBar />
            </div>
            <TrackV />
          </div>
          <TrackH />
          <StatusBar />
        </div>
        <div className="flex-1 border-b-[2px] border-[#3a4046]" />
      </div>

      <Taskbar />
    </div>
  );
}
